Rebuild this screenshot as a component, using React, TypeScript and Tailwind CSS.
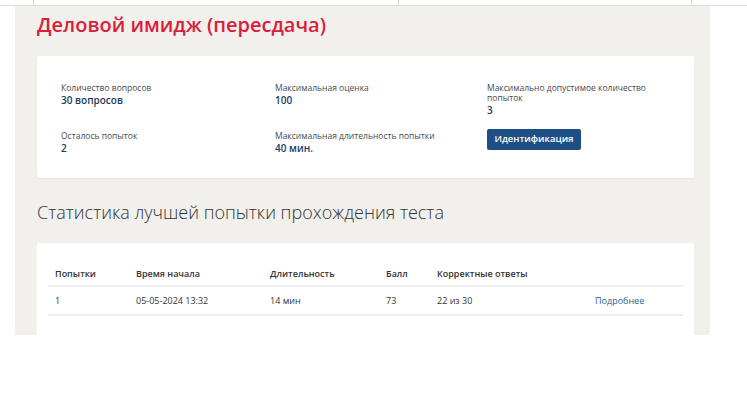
export default function App() {
  const info = [
    { label: "Количество вопросов", value: "30 вопросов" },
    { label: "Максимальная оценка", value: "100" },
    { label: "Максимально допустимое количество попыток", value: "3" },
    { label: "Осталось попыток", value: "2" },
    { label: "Максимальная длительность попытки", value: "40 мин." },
  ];

  return (
    <div className="min-h-[415px] bg-white font-['Open_Sans',sans-serif] text-[#333]">
      <div className="flex h-[6px] border-b border-[#dcdcdc]">
        <div className="w-[34px] border-r border-[#dcdcdc]" />
        <div className="w-[365px] border-r border-[#dcdcdc]" />
        <div className="w-[293px] border-r border-[#dcdcdc]" />
      </div>

      <div className="ml-[15px] h-[329px] w-[695px] overflow-hidden bg-[#f2f0ed] pl-[22px] pr-[16px]">
        <h1 className="pt-[4px] text-[20px] font-semibold leading-[30px] text-[#d8203c]">
          Деловой имидж (пересдача)
        </h1>

        <div className="mt-[16px] rounded-[3px] bg-white px-[24px] pt-[27px] pb-[24px] shadow-[0_1px_2px_rgba(0,0,0,0.06)]">
          <div className="grid grid-cols-[214px_212px_170px] gap-y-[13px]">
            {info.map((i, n) => (
              <div key={i.label} className={n >= 3 ? "pt-[2px]" : ""}>
                <div className="text-[8.5px] leading-[10px] text-[#4a4a4a]">{i.label}</div>
                <div className="mt-[1px] text-[10px] font-semibold leading-[12px] text-[#1c3a5e]">{i.value}</div>
              </div>
            ))}
            <div className="flex">
              <button className="h-[21px] w-[94px] rounded-[2px] bg-[#1d4f85] text-[9.5px] font-semibold text-white">
                Идентификация
              </button>
            </div>
          </div>
        </div>

        <h2 className="mt-[21px] text-[18px] font-light leading-[26px] text-[#333]">
          Статистика лучшей попытки прохождения теста
        </h2>

        <div className="mt-[18px] rounded-[3px] bg-white px-[11px] pt-[20px] pb-[20px]">
          <table className="w-full table-fixed border-collapse text-left text-[9px]">
            <thead>
              <tr className="border-b-2 border-[#eeeeee]">
                <th className="h-[23px] w-[88px] pl-[7px] font-semibold">Попытки</th>
                <th className="w-[134px] font-semibold">Время начала</th>
                <th className="w-[116px] font-semibold">Длительность</th>
                <th className="w-[51px] font-semibold">Балл</th>
                <th className="w-[158px] font-semibold">Корректные ответы</th>
                <th />
              </tr>
            </thead>
            <tbody>
              <tr className="border-b-2 border-[#eeeeee]">
                <td className="h-[29px] pl-[7px]">1</td>
                <td>05-05-2024 13:32</td>
                <td>14 мин</td>
                <td>73</td>
                <td>22 из 30</td>
                <td className="text-[#2b5f94]">Подробнее</td>
              </tr>
            </tbody>
          </table>
        </div>
      </div>
    </div>
  );
}
